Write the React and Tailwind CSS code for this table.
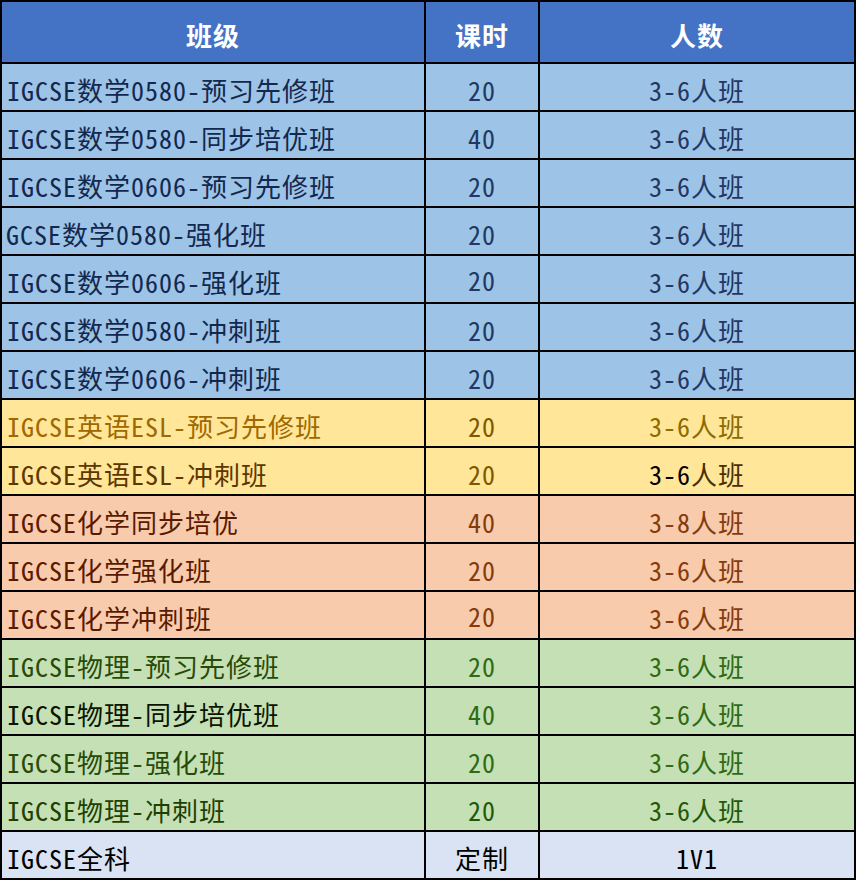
import React from "react";

const FONT = {
  fontFamily:
    '"Noto Sans Mono CJK SC", "Noto Sans CJK SC", "DejaVu Sans Mono", monospace',
};

const rows = [
  { name: "IGCSE数学0580-预习先修班", h: "20", n: "3-6人班", bg: "bg-[#9dc3e6]", l: "text-[#12284e]", c: "text-[#1f3864]", r: "text-[#1f3864]" },
  { name: "IGCSE数学0580-同步培优班", h: "40", n: "3-6人班", bg: "bg-[#9dc3e6]", l: "text-[#12284e]", c: "text-[#1f3864]", r: "text-[#1f3864]" },
  { name: "IGCSE数学0606-预习先修班", h: "20", n: "3-6人班", bg: "bg-[#9dc3e6]", l: "text-[#12284e]", c: "text-[#1f3864]", r: "text-[#1f3864]" },
  { name: "GCSE数学0580-强化班", h: "20", n: "3-6人班", bg: "bg-[#9dc3e6]", l: "text-[#12284e]", c: "text-[#1f3864]", r: "text-[#1f3864]", tight: true },
  { name: "IGCSE数学0606-强化班", h: "20", n: "3-6人班", bg: "bg-[#9dc3e6]", l: "text-[#12284e]", c: "text-[#1f3864]", r: "text-[#1f3864]", up: true },
  { name: "IGCSE数学0580-冲刺班", h: "20", n: "3-6人班", bg: "bg-[#9dc3e6]", l: "text-[#12284e]", c: "text-[#1f3864]", r: "text-[#1f3864]" },
  { name: "IGCSE数学0606-冲刺班", h: "20", n: "3-6人班", bg: "bg-[#9dc3e6]", l: "text-[#12284e]", c: "text-[#1f3864]", r: "text-[#1f3864]" },
  { name: "IGCSE英语ESL-预习先修班", h: "20", n: "3-6人班", bg: "bg-[#ffe699]", l: "text-[#a06800]", c: "text-[#7f5800]", r: "text-[#8a6c00]" },
  { name: "IGCSE英语ESL-冲刺班", h: "20", n: "3-6人班", bg: "bg-[#ffe699]", l: "text-[#5e3600]", c: "text-[#7f5800]", r: "text-[#4a3000]", mixed: true },
  { name: "IGCSE化学同步培优", h: "40", n: "3-8人班", bg: "bg-[#f8cbad]", l: "text-[#5a1a00]", c: "text-[#843c0c]", r: "text-[#843c0c]" },
  { name: "IGCSE化学强化班", h: "20", n: "3-6人班", bg: "bg-[#f8cbad]", l: "text-[#5a1a00]", c: "text-[#843c0c]", r: "text-[#843c0c]" },
  { name: "IGCSE化学冲刺班", h: "20", n: "3-6人班", bg: "bg-[#f8cbad]", l: "text-[#5a1a00]", c: "text-[#843c0c]", r: "text-[#843c0c]", up: true },
  { name: "IGCSE物理-预习先修班", h: "20", n: "3-6人班", bg: "bg-[#c5e0b4]", l: "text-[#284a08]", c: "text-[#2e6b14]", r: "text-[#2e6b14]" },
  { name: "IGCSE物理-同步培优班", h: "40", n: "3-6人班", bg: "bg-[#c5e0b4]", l: "text-[#0a1400]", c: "text-[#2e6b14]", r: "text-[#2e6b14]" },
  { name: "IGCSE物理-强化班", h: "20", n: "3-6人班", bg: "bg-[#c5e0b4]", l: "text-[#284a08]", c: "text-[#2e6b14]", r: "text-[#2e6b14]" },
  { name: "IGCSE物理-冲刺班", h: "20", n: "3-6人班", bg: "bg-[#c5e0b4]", l: "text-[#1e4000]", c: "text-[#1e5a0a]", r: "text-[#1e5a0a]" },
  { name: "IGCSE全科", h: "定制", n: "1V1", bg: "bg-[#dae3f3]", l: "text-black", c: "text-black", r: "text-black" },
];

export default function App() {
  return (
    <div className="w-[856px] bg-white" style={FONT}>
      <div className="grid grid-cols-[426px_114px_316px] h-[64px] bg-[#4472c4] text-white font-bold text-[26px] tracking-[1px] border-t-2 border-black">
        <div className="border-l-2 border-r-2 border-b-2 border-black flex items-center justify-center pt-[5px]">班级</div>
        <div className="border-r-2 border-b-2 border-black flex items-center justify-center pt-[5px]">课时</div>
        <div className="border-r-2 border-b-2 border-black flex items-center justify-center pt-[5px]">人数</div>
      </div>
      {rows.map((row, i) => (
        <div
          key={i}
          className={`grid grid-cols-[426px_114px_316px] h-[48px] text-[26px] tracking-[1px] ${row.bg}`}
        >
          <div
            className={`border-l-2 border-r-2 border-b-2 border-black flex items-center whitespace-nowrap overflow-hidden pt-[4px] ${row.tight ? "pl-[4px]" : "pl-[5px]"} ${row.l}`}
          >
            {row.name}
          </div>
          <div
            className={`border-r-2 border-b-2 border-black flex justify-center ${row.up ? "items-start pt-[4px]" : "items-center pt-[4px]"} ${row.c}`}
          >
            {row.h}
          </div>
          <div className={`border-r-2 border-b-2 border-black flex items-center justify-center pt-[4px] ${row.r}`}>
            {row.mixed ? (
              <span>
                <span className="text-black">3-6</span>人班
              </span>
            ) : (
              row.n
            )}
          </div>
        </div>
      ))}
    </div>
  );
}
